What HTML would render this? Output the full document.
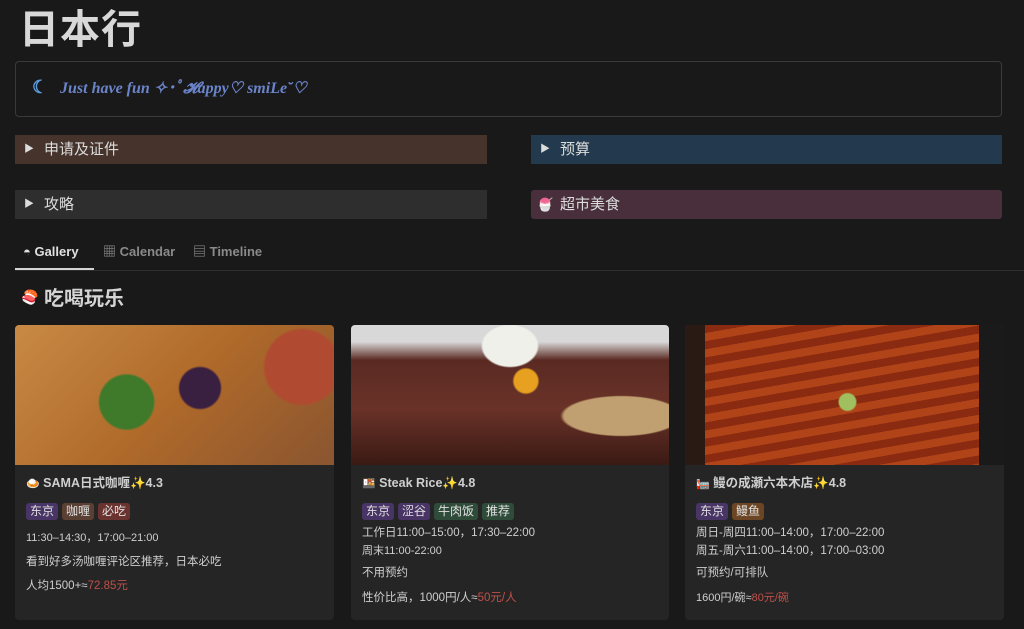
<!DOCTYPE html>
<html><head><meta charset="utf-8"><style>
*{box-sizing:border-box;margin:0;padding:0}
body{width:1024px;height:629px;overflow:hidden;background:#191919;color:#d4d4d4;font-family:"Liberation Sans","Noto Sans CJK SC",sans-serif;position:relative}
.abs{position:absolute}
h1{position:absolute;left:19px;top:2px;font-size:40px;line-height:56px;font-weight:700;color:#d8d8d8;letter-spacing:1px}
.quote{left:15px;top:61px;width:987px;height:56px;border:1px solid #3a3a3a;border-radius:4px}
.quote .t{position:absolute;left:44px;top:17px;line-height:20px;font-family:"Liberation Serif",serif;font-style:italic;font-weight:700;font-size:16px;color:#6b84c9}
.tog{position:absolute;height:29px;width:472px;font-size:15px;color:#dcdcdc;line-height:29px;padding-left:29px}
.tog .tri{position:absolute;left:9px;top:0;font-size:10px}
.tabs{left:15px;top:240px;width:1009px;height:31px;border-bottom:1px solid #2e2e2e;font-size:13px;font-weight:700}
.tab{position:absolute;top:4px;color:#8a8a8a;line-height:16px}
.card{position:absolute;top:325px;height:295px;background:#252525;border-radius:4px;overflow:hidden}
.img{height:140px;width:100%}
.ct{position:absolute;left:11px;font-size:12px;color:#cfcfcf;line-height:16px;white-space:nowrap}
.title{top:150px;font-weight:700;font-size:12.5px;height:16px;overflow:hidden}
.title .e{font-size:11px}
.tags{top:178px;display:flex;gap:4px}
.tag{font-size:12px;padding:0 4px;height:17px;line-height:17px;border-radius:3px;color:#e0e0e0}
.p{background:#493466}.b{background:#5a3f33}.r{background:#6a3330}.g{background:#2f4c3a}.o{background:#6b4524}
.red{color:#c0504a}
</style></head><body>
<h1>日本行</h1>
<div class="abs quote"><span class="abs" style="left:16px;top:15px;color:#5a9be0;font-size:18px;font-weight:700">☾</span><span class="t">Just have fun ✧･ﾟ𝓗appy♡ smiLe˘♡</span></div>
<div class="tog" style="left:15px;top:135px;background:#45332c"><span class="tri">▶</span>申请及证件</div>
<div class="tog" style="left:531px;top:135px;width:471px;background:#233a4e"><span class="tri">▶</span>预算</div>
<div class="tog" style="left:15px;top:190px;background:#2e2e2e"><span class="tri">▶</span>攻略</div>
<div class="tog" style="left:531px;top:190px;width:471px;background:#492f3c;border-radius:3px"><span class="tri" style="font-size:13px;left:6px">🍧</span>超市美食</div>
<div class="abs tabs">
<div class="tab" style="left:8px;color:#e0e0e0">◓ Gallery</div>
<div class="tab" style="left:88px">▦ Calendar</div>
<div class="tab" style="left:178px">▤ Timeline</div>
<div class="abs" style="left:0;top:28px;width:79px;height:2px;background:#d4d4d4"></div>
</div>
<div class="abs" style="left:21px;top:284px;font-size:20px;line-height:26px;font-weight:700;color:#d4d4d4"><span style="font-size:14px;vertical-align:3px">🍣</span> 吃喝玩乐</div>

<div class="card" style="left:15px;width:319px">
<div class="img" style="background:radial-gradient(circle at 35% 55%,#3f7a2a 0 12%,transparent 13%),radial-gradient(circle at 58% 45%,#3a2040 0 10%,transparent 11%),radial-gradient(circle at 90% 30%,#b04a30 0 12%,transparent 13%),linear-gradient(135deg,#c88a45,#b06a2a 50%,#8a5530)"></div>
<div class="ct title"><span class="e">🍛</span> SAMA日式咖喱✨4.3</div>
<div class="ct tags"><span class="tag p">东京</span><span class="tag b">咖喱</span><span class="tag r">必吃</span></div>
<div class="ct" style="top:205px;font-size:11px">11:30–14:30，17:00–21:00</div>
<div class="ct" style="top:229px;font-size:11.5px">看到好多汤咖喱评论区推荐，日本必吃</div>
<div class="ct" style="top:253px;font-size:11.5px">人均1500+≈<span class="red">72.85元</span></div>
</div>

<div class="card" style="left:351px;width:318px">
<div class="img" style="background:radial-gradient(ellipse at 50% 15%,#f0f0ea 0 12%,transparent 13%),radial-gradient(circle at 55% 40%,#e8a020 0 6%,transparent 7%),radial-gradient(ellipse at 85% 65%,#c0a070 0 15%,transparent 16%),linear-gradient(180deg,#d8d8d8 0 12%,#5a2a22 25%,#6a3228 60%,#3a1a14)"></div>
<div class="ct title"><span class="e">🍱</span> Steak Rice✨4.8</div>
<div class="ct tags"><span class="tag p">东京</span><span class="tag p">涩谷</span><span class="tag g">牛肉饭</span><span class="tag g">推荐</span></div>
<div class="ct" style="top:200px;font-size:11.5px">工作日11:00–15:00，17:30–22:00</div>
<div class="ct" style="top:218px;font-size:11px">周末11:00-22:00</div>
<div class="ct" style="top:240px;font-size:11.5px">不用预约</div>
<div class="ct" style="top:265px;font-size:11.5px">性价比高，1000円/人≈<span class="red">50元/人</span></div>
</div>

<div class="card" style="left:685px;width:319px">
<div class="img" style="background:radial-gradient(circle at 52% 55%,#a0c060 0 5%,transparent 6%),repeating-linear-gradient(170deg,#8a2a10 0 8px,#b04418 8px 16px),#7a2a12;border-left:20px solid #2a1a14;border-right:25px solid #1a1a1a"></div>
<div class="ct title"><span class="e">🏣</span> 鳗の成瀬六本木店✨4.8</div>
<div class="ct tags"><span class="tag p">东京</span><span class="tag o">鳗鱼</span></div>
<div class="ct" style="top:200px;font-size:11.5px">周日-周四11:00–14:00，17:00–22:00</div>
<div class="ct" style="top:218px;font-size:11.5px">周五-周六11:00–14:00，17:00–03:00</div>
<div class="ct" style="top:240px;font-size:11.5px">可预约/可排队</div>
<div class="ct" style="top:265px;font-size:11px">1600円/碗≈<span class="red">80元/碗</span></div>
</div>
</body></html>
